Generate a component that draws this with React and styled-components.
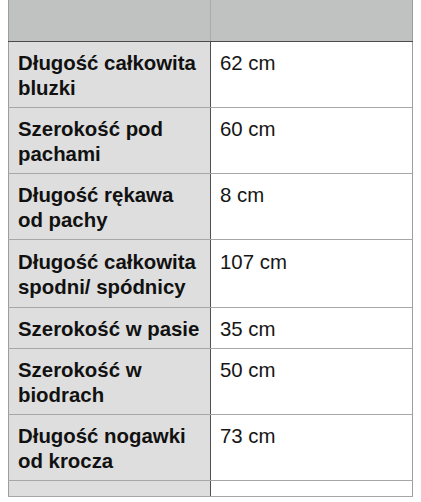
import React from "react";
import styled, { createGlobalStyle } from "styled-components";

const GlobalStyle = createGlobalStyle`
  html, body {
    margin: 0;
    padding: 0;
    background: #ffffff;
  }
  body {
    font-family: "Liberation Sans", Arial, Helvetica, sans-serif;
    color: #111111;
  }
`;

const rows = [
  { label: "Długość całkowita bluzki", value: "62 cm" },
  { label: "Szerokość pod pachami", value: "60 cm" },
  { label: "Długość rękawa od pachy", value: "8 cm" },
  { label: "Długość całkowita spodni/ spódnicy", value: "107 cm", tall: true },
  { label: "Szerokość w pasie", value: "35 cm" },
  { label: "Szerokość w biodrach", value: "50 cm" },
  { label: "Długość nogawki od krocza", value: "73 cm" },
  { label: "", value: "" },
];

const App = () => {
  return (
    <>
      <GlobalStyle />
      <Page>
        <SizeTable>
          <colgroup>
            <col style={{ width: "202px" }} />
            <col />
          </colgroup>
          <thead>
            <tr>
              <HeadCell />
              <HeadCell />
            </tr>
          </thead>
          <tbody>
            {rows.map((row, i) => (
              <Row key={i} $tall={row.tall}>
                <Label>{row.label}</Label>
                <Value>{row.value}</Value>
              </Row>
            ))}
          </tbody>
        </SizeTable>
      </Page>
    </>
  );
};

export default App;

const Page = styled.div`
  padding: 0 8px;
  height: 502px;
  overflow: hidden;
`;

const SizeTable = styled.table`
  width: 405px;
  border-collapse: collapse;
  table-layout: fixed;
  border-left: 1px solid #9d9d9d;
  border-right: 1px solid #9d9d9d;
`;

const HeadCell = styled.th`
  height: 41px;
  padding: 0;
  background: #c0c2c1;
  border-bottom: 1px solid #4b4b4b;
  border-right: 1px solid #a9abaa;

  &:last-child {
    border-right: none;
  }
`;

const Row = styled.tr`
  td {
    padding: ${(p) => (p.$tall ? "10px 9px 7px" : "9px 9px 6px")};
    border-bottom: 1px solid #a7a7a7;
    vertical-align: top;
    font-size: 20.4px;
    line-height: 25px;
  }
`;

const Label = styled.td`
  background: #dedede;
  font-weight: 700;
  color: #111111;
  border-right: 1px solid #505050;
`;

const Value = styled.td`
  background: #ffffff;
  font-weight: 400;
  color: #161616;
`;
